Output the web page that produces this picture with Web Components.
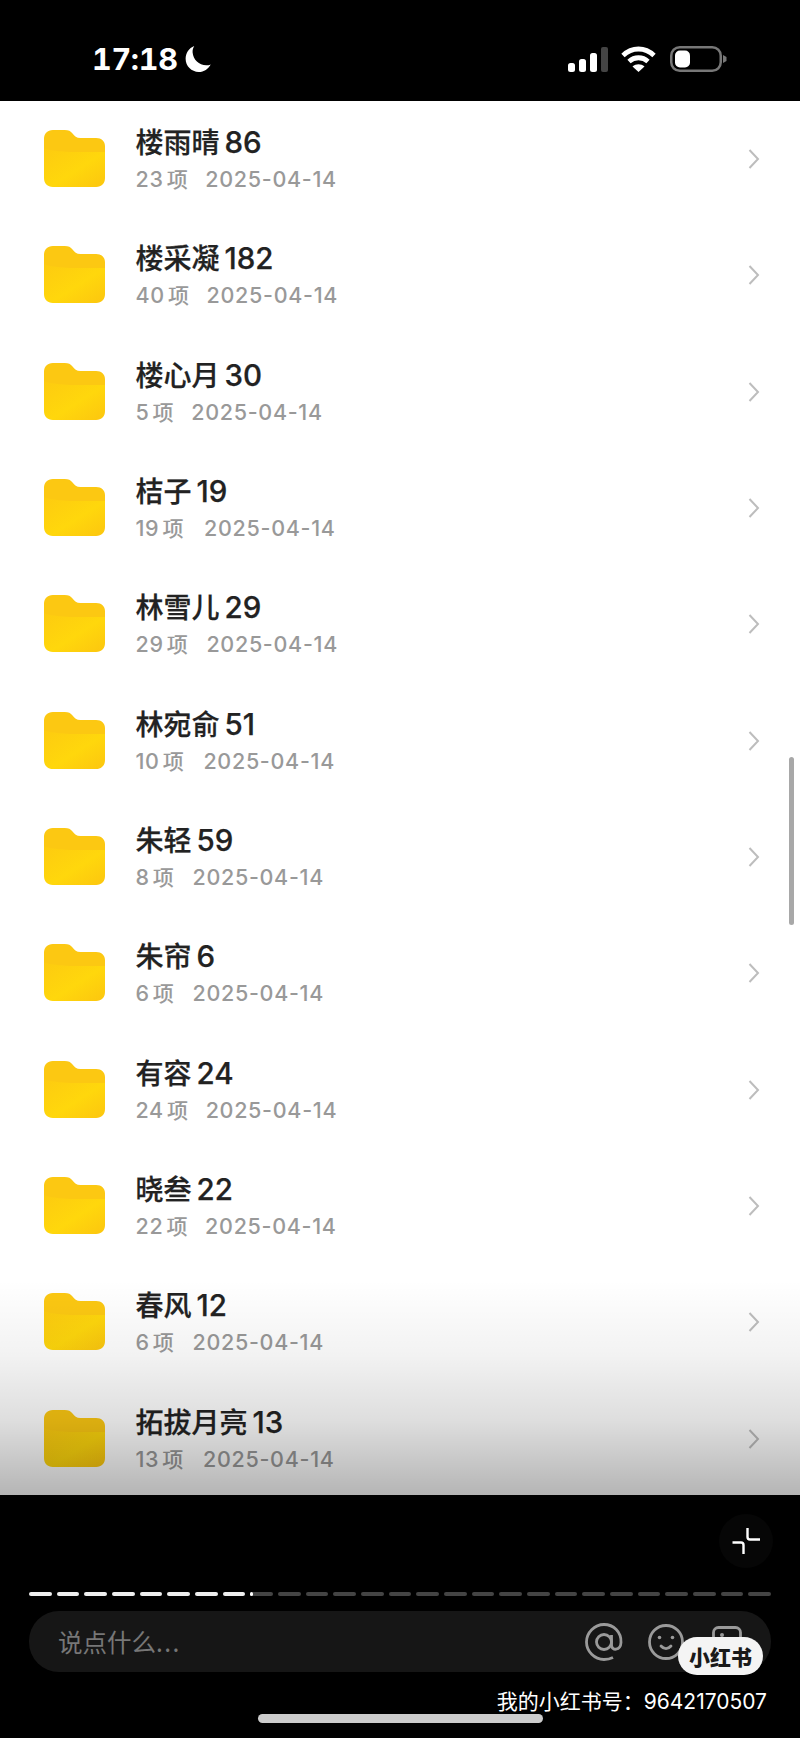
<!DOCTYPE html>
<html lang="zh"><head><meta charset="utf-8">
<style>
html,body{margin:0;padding:0;background:#000}
body{width:800px;height:1738px;overflow:hidden;font-family:"Inter","Noto Sans CJK SC",sans-serif}
</style></head><body>
<phone-screen>
  <status-bar slot="status" time="17:18"></status-bar>
  <file-row name="楼雨晴" num="86" count="23" gap="17"></file-row>
  <file-row name="楼采凝" num="182" count="40" gap="17"></file-row>
  <file-row name="楼心月" num="30" count="5" gap="17"></file-row>
  <file-row name="桔子" num="19" count="19" gap="20"></file-row>
  <file-row name="林雪儿" num="29" count="29" gap="18"></file-row>
  <file-row name="林宛俞" num="51" count="10" gap="19"></file-row>
  <file-row name="朱轻" num="59" count="8" gap="18"></file-row>
  <file-row name="朱帘" num="6" count="6" gap="18"></file-row>
  <file-row name="有容" num="24" count="24" gap="17"></file-row>
  <file-row name="晓叁" num="22" count="22" gap="17"></file-row>
  <file-row name="春风" num="12" count="6" gap="18"></file-row>
  <file-row name="拓拔月亮" num="13" count="13" gap="19"></file-row>
  <bottom-panel slot="bottom"></bottom-panel>
</phone-screen>
<script>
class PhoneScreen extends HTMLElement{constructor(){super();this.attachShadow({mode:'open'}).innerHTML=`
<style>
:host{display:flex;flex-direction:column;width:800px;height:1738px;background:#000;position:relative;overflow:hidden}
.list{height:1394px;background:#fff;overflow:hidden;position:relative;box-sizing:border-box}
.fade{position:absolute;left:0;right:0;bottom:0;height:215px;background:linear-gradient(to bottom,rgba(0,0,0,0),rgba(0,0,0,.05) 35%,rgba(0,0,0,.13) 65%,rgba(0,0,0,.29));pointer-events:none}
.thumb{position:absolute;right:6px;top:656px;width:5px;height:168px;border-radius:3px;background:#a8a8a8}
</style>
<slot name="status"></slot>
<div class="list"><slot></slot><div class="fade"></div><div class="thumb"></div></div>
<slot name="bottom"></slot>`}}
customElements.define('phone-screen',PhoneScreen);

class StatusBar extends HTMLElement{connectedCallback(){this.attachShadow({mode:'open'}).innerHTML=`
<style>
:host{display:flex;height:101px;flex:none;align-items:flex-start;justify-content:space-between;padding:42px 73px 0 92px;box-sizing:border-box;color:#fff}
.l{display:flex;align-items:center;gap:6px;height:34px}
.t{font:700 30.500px/34px "Inter","Liberation Sans",sans-serif;font-feature-settings:"tnum";letter-spacing:-.3px}
.r{display:flex;align-items:center;height:34px}
svg{display:block}
</style>
<div class="l"><span class="t">${this.getAttribute('time')}</span>
<svg width="28" height="28" viewBox="0 0 26 26"><path fill="#fff" d="M9.500 1C4.600 3 1.500 7.600 1.500 12.800C1.500 19.600 7 25 13.700 25C18.500 25 22.700 22.200 24.800 18C23.700 18.500 22.200 18.800 20.600 18.800C14 18.800 8.500 13.600 8 7C7.800 4.800 8.500 2.700 9.500 1Z"/></svg></div>
<div class="r">
<svg width="40" height="25" viewBox="0 0 40 25" style="margin-right:13px"><rect x="0" y="16" width="7" height="9" rx="2.500" fill="#fff"/><rect x="11" y="12" width="7" height="13" rx="2.500" fill="#fff"/><rect x="22" y="6" width="7" height="19" rx="2.500" fill="#fff"/><rect x="33" y="0" width="7" height="25" rx="2" fill="#444"/></svg>
<svg width="35" height="26" viewBox="0 0 35 26" fill="none" stroke="#fff" stroke-width="4.800" style="margin-right:14px"><path d="M2 9.500C11 .8 24 .8 33 9.500"/><path d="M8 15.500C13.500 10.500 21.500 10.500 27 15.500"/><path d="M17.500 26L11.500 20.500C15 17.500 20 17.500 23.500 20.500Z" fill="#fff" stroke="none"/></svg>
<svg width="57" height="26" viewBox="0 0 57 26"><rect x="1.250" y="1.250" width="49.500" height="23.500" rx="8.500" fill="none" stroke="#777" stroke-width="2.500"/><rect x="5" y="4.500" width="15" height="17" rx="5" fill="#fff"/><path d="M53 9l3.500 2v4l-3.500 2z" fill="#777"/></svg>
</div>`}}
customElements.define('status-bar',StatusBar);

class FileRow extends HTMLElement{connectedCallback(){const a=n=>this.getAttribute(n);this.attachShadow({mode:'open'}).innerHTML=`
<style>
:host{display:flex;height:116.33px;align-items:flex-start;box-sizing:border-box;padding:0 40px 0 44px;position:relative;--f:"Inter","Noto Sans CJK SC",sans-serif}
svg{display:block;flex:none}
.ic{margin-top:29px;width:61px;height:57px}
.m{margin-left:30.500px;flex:1;padding-top:21px}
.n{font:500 28px/40px var(--f);color:#222;white-space:pre;-webkit-text-stroke:.25px #222;display:flex;align-items:baseline}
.n b{font:500 29.500px/40px var(--f);margin-left:5px}
.s{font:500 21.500px/30px var(--f);color:#999;margin-top:1px;display:flex;letter-spacing:.7px}
.s i{font-style:normal;margin-left:3px;font-size:21px}
.ch{margin-top:47px}
</style>
<svg class="ic" viewBox="0 0 62 57" preserveAspectRatio="none"><defs><linearGradient id="g" x1="0" y1="0" x2="1" y2="1"><stop offset="0" stop-color="#fdcb10"/><stop offset=".55" stop-color="#ffd70c"/><stop offset="1" stop-color="#fcc60f"/></linearGradient></defs>
<path fill="#fcc812" d="M9 0H21C25 0 27 1 29 3.500C31 6 33 8 37 8H53C58.500 8 62 11.500 62 16V30H0V9C0 3.500 3.500 0 9 0Z"/>
<path fill="url(#g)" d="M0 18C5 21 25 22 31 22H62V48C62 53.500 58.500 57 53 57H9C3.500 57 0 53.500 0 48Z"/></svg>
<div class="m"><div class="n"><span>${a('name')}</span><b>${a('num')}</b></div><div class="s"><span style="margin-right:${a('gap')}px">${a('count')}<i>项</i></span><span>2025-04-14</span></div></div>
<svg class="ch" width="12" height="22" viewBox="0 0 12 22" fill="none" stroke="#bdbdbd" stroke-width="2"><path d="M1.500 2L10 11L1.500 20"/></svg>`}}
customElements.define('file-row',FileRow);

class BottomPanel extends HTMLElement{connectedCallback(){const segs=Array.from({length:27},(_,i)=>`<i class="${i<8?'on':''}"></i>`).join('');this.attachShadow({mode:'open'}).innerHTML=`
<style>
:host{display:block;flex:1;position:relative;color:#fff;font-family:"Noto Sans CJK SC",sans-serif}
.top{display:flex;justify-content:flex-end;height:97px;padding:19px 27px 0 0;box-sizing:border-box}
.circle{width:54px;height:54px;border-radius:50%;background:#060606;display:flex;align-items:center;justify-content:center}
.bar{display:flex;justify-content:space-between;margin:0 29px;height:4px;position:relative}
.bar i{width:22.500px;height:4px;border-radius:2px;background:#444}
.bar i.on{background:#eee}
.bar b{position:absolute;left:221px;top:0;width:3px;height:4px;border-radius:2px;background:#fff}
.input{margin:15px 29px 0;height:61px;border-radius:30px;background:#161616;display:flex;align-items:center;padding:0 0 0 29px;box-sizing:border-box}
.ph{flex:1;font-size:24.500px;color:#777;line-height:61px}
.ph span{letter-spacing:1.500px}
.input svg{display:block;flex:none}
.mark{position:absolute;left:678px;top:142px;width:85px;height:38px;border-radius:19px;background:#f4f4f4;color:#1a1a1a;font:900 21px/38px "Noto Sans CJK SC",sans-serif;text-align:center}
.id{position:absolute;right:33px;top:192px;font:400 21px/30px "Inter","Noto Sans CJK SC",sans-serif;white-space:nowrap;color:#fff}
.home{position:absolute;left:258px;top:219px;width:285px;height:9px;border-radius:5px;background:#ccc}
</style>
<div class="top"><div class="circle"><svg width="30" height="30" viewBox="0 0 30 30" fill="none" stroke="#fff" stroke-width="2.400"><path d="M16.500 2V11a2.500 2.500 0 0 0 2.500 2.500H29"/><path d="M1.500 16.500H10a2.500 2.500 0 0 1 2.500 2.500V28"/></svg></div></div>
<div class="bar">${segs}<b></b></div>
<div class="input"><span class="ph">说点什么<span>...</span></span>
<svg width="38" height="38" viewBox="0 0 38 38" fill="none" stroke="#9a9a9a" stroke-width="2.800" style="margin-right:25px"><circle cx="19" cy="19" r="7.500"/><path d="M26.500 12v10c0 6 9 6 9.500-2.500C36.500 9 28.500 1.500 19 1.500C9.500 1.500 1.500 9.500 1.500 19s8 17.500 17.500 17.500c4 0 7-1 9-2"/></svg>
<svg width="36" height="36" viewBox="0 0 36 36" fill="none" stroke="#9a9a9a" stroke-width="2.800" style="margin-right:28px"><circle cx="18" cy="18" r="16.500"/><circle cx="11.500" cy="13.500" r="1.800" fill="#9a9a9a" stroke="none"/><circle cx="24.500" cy="13.500" r="1.800" fill="#9a9a9a" stroke="none"/><path d="M13 22c3 3.500 7 3.500 10 0" stroke-linecap="round"/></svg>
<svg width="30" height="30" viewBox="0 0 30 30" fill="none" stroke="#9a9a9a" stroke-width="2.800" style="margin-right:29px;align-self:flex-start;margin-top:15px"><rect x="1.500" y="1.500" width="27" height="27" rx="5"/><circle cx="10" cy="9" r="2" fill="#9a9a9a" stroke="none"/></svg>
</div>
<div class="mark">小红书</div>
<div class="id">我的小红书号：9642170507</div>
<div class="home"></div>`}}
customElements.define('bottom-panel',BottomPanel);
</script>
</body></html>
